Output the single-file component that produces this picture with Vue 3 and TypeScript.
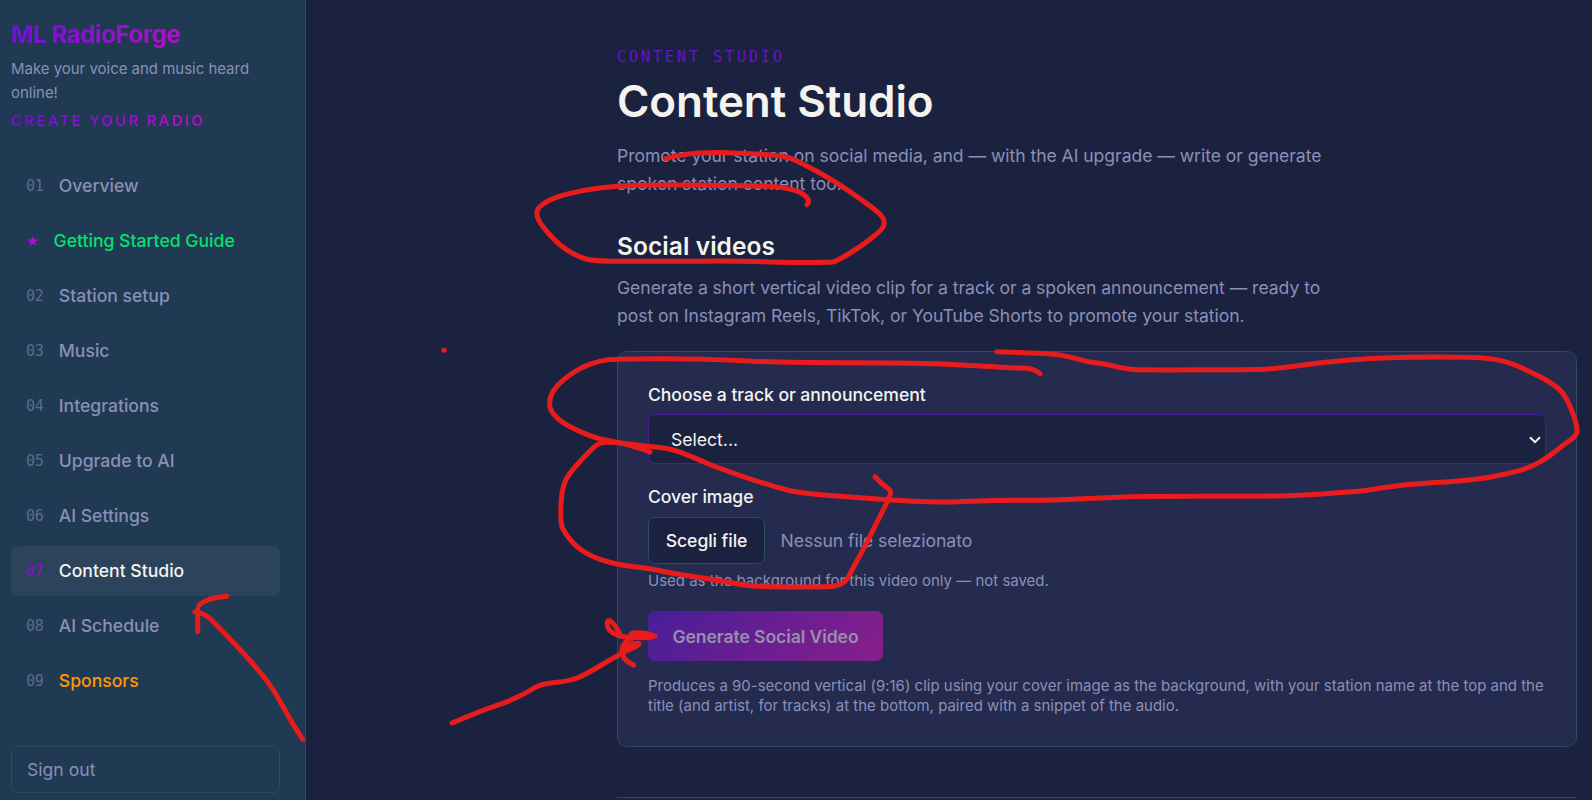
<script setup lang="ts">
interface NavItem {
  mark: string
  label: string
  tone?: 'guide' | 'sponsor'
  active?: boolean
}

type Point = [number, number]

const navItems: NavItem[] = [
  { mark: '01', label: 'Overview' },
  { mark: '★', label: 'Getting Started Guide', tone: 'guide' },
  { mark: '02', label: 'Station setup' },
  { mark: '03', label: 'Music' },
  { mark: '04', label: 'Integrations' },
  { mark: '05', label: 'Upgrade to AI' },
  { mark: '06', label: 'AI Settings' },
  { mark: '07', label: 'Content Studio', active: true },
  { mark: '08', label: 'AI Schedule' },
  { mark: '09', label: 'Sponsors', tone: 'sponsor' },
]

// Freehand marker strokes drawn over the page.
const strokes: Point[][] = [
  [[665.7, 158.7], [680, 154.3], [713, 152.3], [740, 153], [773, 155], [790, 157.5], [803, 164], [833, 180], [863, 200.7], [881.7, 215], [885, 223], [881.7, 230], [863, 245], [837, 261], [830, 262.5], [776.7, 262.3], [746.7, 261], [653, 261.3], [596.7, 261.3], [580, 257.7], [560, 246], [540, 224], [536, 213.3], [539, 206.7], [553, 197.7], [583, 190], [616.7, 186], [653, 184.7], [720, 185.3], [773, 186], [796.7, 190], [807, 196.7], [809, 201.7], [807, 204.7]],
  [[996.7, 351.7], [1023, 352.7], [1053, 354], [1070, 356.7], [1088, 362], [1103, 363.7], [1126.7, 369], [1140, 370], [1253, 369.7], [1276.7, 368.7], [1326.7, 362], [1366.7, 358.7], [1410, 357], [1460, 357], [1486.7, 358], [1503, 360.7], [1520, 366.7], [1553, 383.3], [1565, 395], [1573, 413], [1577.5, 428], [1576.5, 436], [1563, 445], [1550, 456], [1530, 467.7], [1506.7, 474], [1480, 479], [1446.7, 482], [1403, 484.3], [1363, 491.3], [1343, 492.3], [1300, 495.7], [1260, 496.3], [1136.7, 496.3], [1100, 498], [1066.7, 499.7], [1036.7, 500.3], [993, 500.3], [950, 502], [930, 502], [896.7, 500.7], [850, 497], [803, 493.3], [780, 488.7], [723, 470], [690, 456], [673, 449.3], [650, 446.3], [610, 442]],
  [[650, 452], [630, 444.5], [610, 441], [593, 437.3], [563, 424], [551, 411.7], [549, 403], [552, 391.7], [561.7, 381], [580, 367.7], [600, 360.7], [616.7, 358.7], [706.7, 358.7], [776.7, 362.7], [913, 362.7], [960, 365], [993, 366.7], [1013, 368], [1028, 368], [1036.7, 370.7], [1040, 374]],
  [[875, 476.7], [883, 485], [891, 490], [890, 496.7], [873, 530], [866.7, 543], [853, 568], [847, 580], [840, 585], [830, 587], [763, 587], [743, 585], [710, 579], [670, 573], [653, 569], [620, 565], [596.7, 559], [576.7, 547.7], [562.5, 530], [560.7, 520], [561, 500], [563, 486.7], [568, 475], [583, 458], [595, 446], [601.7, 442.3], [612, 442]],
  [[302.7, 739.3], [291.7, 723], [273, 688], [250, 660], [216.7, 625], [205, 614], [194.8, 611.7]],
  [[197.7, 609.3], [197.7, 631.5]],
  [[226.7, 596.3], [213, 597.7], [201.7, 602.7], [199, 605.3]],
  [[452, 723], [483, 710], [508, 701.7], [528, 692], [540, 684], [570, 681], [586.7, 674], [618, 655], [642, 643.5], [634, 643], [626, 647]],
  [[621, 636], [615, 625], [609, 619.5], [606.5, 623], [609, 631], [620, 636.7], [640, 638], [655, 637.5], [650, 633.5], [634, 632.5], [629, 635], [655, 636]],
  [[633.5, 665], [625, 661], [621, 651], [625, 641], [636, 637]],
  [[443.9, 350.3], [444.2, 350.3]],
]

function smoothPath(points: Point[]): string {
  let d = `M${points[0][0]} ${points[0][1]}`
  for (let i = 1; i < points.length - 1; i++) {
    const [x, y] = points[i]
    const [nx, ny] = points[i + 1]
    d += ` Q${x} ${y} ${(x + nx) / 2} ${(y + ny) / 2}`
  }
  const [ex, ey] = points[points.length - 1]
  return `${d} L${ex} ${ey}`
}
</script>

<template>
  <div class="app">
    <aside class="sidebar">
      <header class="brand">
        <div class="brand-name grad">ML RadioForge</div>
        <p class="tagline">Make your voice and music heard online!</p>
        <div class="callout grad">CREATE YOUR RADIO</div>
      </header>
      <nav class="nav">
        <a v-for="item in navItems" :key="item.mark" class="nav-item" :class="[item.tone, { active: item.active }]">
          <span class="mark">{{ item.mark }}</span>
          <span>{{ item.label }}</span>
        </a>
      </nav>
      <button class="sign-out" type="button">Sign out</button>
    </aside>

    <main class="main">
      <div class="content">
        <div class="eyebrow">CONTENT STUDIO</div>
        <h1>Content Studio</h1>
        <p class="lead">Promote your station on social media, and — with the AI upgrade — write or generate spoken station content too.</p>
        <h2>Social videos</h2>
        <p class="lead">Generate a short vertical video clip for a track or a spoken announcement — ready to post on Instagram Reels, TikTok, or YouTube Shorts to promote your station.</p>

        <section class="card">
          <label class="label" for="track">Choose a track or announcement</label>
          <div class="select-wrap">
            <select id="track" class="select">
              <option>Select...</option>
            </select>
            <svg class="chevron" viewBox="0 0 12 8" width="12" height="8" aria-hidden="true">
              <path d="M1 1.2 6 6.2 11 1.2" />
            </svg>
          </div>
          <div class="label">Cover image</div>
          <div class="file-row">
            <button class="file-button" type="button">Scegli file</button>
            <span class="file-name">Nessun file selezionato</span>
          </div>
          <p class="hint">Used as the background for this video only — not saved.</p>
          <button class="generate" type="button">Generate Social Video</button>
          <p class="hint">Produces a 90-second vertical (9:16) clip using your cover image as the background, with your station name at the top and the title (and artist, for tracks) at the bottom, paired with a snippet of the audio.</p>
        </section>
        <hr class="rule" />
      </div>
    </main>

    <svg class="marker" viewBox="0 0 1592 800" width="1592" height="800" aria-hidden="true">
      <path v-for="(stroke, i) in strokes" :key="i" :d="smoothPath(stroke)" />
    </svg>
  </div>
</template>

<style>
body {
  margin: 0;
  background: #1b223f;
  overflow: hidden;
}
</style>

<style scoped>
.app {
  position: relative;
  display: flex;
  width: 1592px;
  height: 800px;
  overflow: hidden;
  background: #1b223f;
  color: #8b8fb8;
  font-family: Inter, "Liberation Sans", sans-serif;
  font-size: 17.6px;
}
.app * {
  box-sizing: border-box;
}
p, h1, h2 {
  margin: 0;
}
button, select {
  font: inherit;
}
.sidebar {
  display: flex;
  flex-direction: column;
  width: 306px;
  height: 800px;
  flex: none;
  padding: 19px 25px 7px 11px;
  background: #1f3a52;
  border-right: 1px solid #2d4a63;
}
.brand {
  height: 142px;
  flex: none;
}
.grad {
  width: fit-content;
  background: linear-gradient(135deg, #6a11d8, #b80fc8);
  background-clip: text;
  -webkit-background-clip: text;
  color: transparent;
}
.brand-name {
  font-size: 24.2px;
  line-height: 32px;
  font-weight: 700;
  letter-spacing: -0.48px;
}
.tagline {
  margin-top: 6px;
  font-size: 14.96px;
  line-height: 24px;
}
.callout {
  margin-top: 4px;
  font-size: 15px;
  line-height: 23px;
  font-weight: 600;
  letter-spacing: 2.27px;
}
.nav {
  display: flex;
  flex-direction: column;
  gap: 5px;
}
.nav-item {
  display: flex;
  align-items: center;
  gap: 15.5px;
  height: 50px;
  padding: 0 15px 2px;
  border-radius: 7px;
  font-weight: 500;
}
.mark {
  width: 17.3px;
  padding-top: 2px;
  font-family: "DejaVu Sans Mono", monospace;
  font-size: 15px;
  letter-spacing: -0.3px;
  font-weight: 400;
  color: #5c6b8d;
}
.guide {
  color: #05e070;
}
.guide .mark {
  width: 12px;
  padding-top: 1px;
  font-family: "DejaVu Sans", sans-serif;
  font-size: 14.5px;
  color: #b00fce;
}
.sponsor {
  color: #ff9800;
}
.active {
  background: #2b445b;
  color: #f5f3ee;
}
.active .mark {
  background: linear-gradient(135deg, #6a11d8, #b80fc8);
  background-clip: text;
  -webkit-background-clip: text;
  color: transparent;
}
.sign-out {
  height: 47px;
  margin-top: auto;
  padding: 0 15px;
  border: 1px solid #2d4a63;
  border-radius: 7px;
  background: transparent;
  color: #8b8fb8;
  text-align: left;
}
.main {
  flex: 1;
  padding: 46px 15px 0 311px;
}
.content {
  width: 960px;
}
.eyebrow {
  font-family: "DejaVu Sans Mono", monospace;
  font-size: 15px;
  line-height: 23px;
  letter-spacing: 2.97px;
  color: #6a11cb;
}
h1 {
  margin-top: 4px;
  font-size: 44px;
  line-height: 56px;
  font-weight: 600;
  letter-spacing: -0.08px;
  color: #f5f3ee;
}
.lead {
  width: 720px;
  line-height: 28px;
  letter-spacing: -0.05px;
}
h1 + .lead {
  margin-top: 13px;
}
h2 {
  margin: 31px 0 11px;
  font-size: 24.5px;
  line-height: 34px;
  font-weight: 600;
  letter-spacing: 0.07px;
  color: #f5f3ee;
}
.card {
  display: flex;
  flex-direction: column;
  align-items: flex-start;
  height: 396px;
  margin-top: 21px;
  padding: 29px 30px;
  border: 1px solid #2d4a63;
  border-radius: 10px;
  background: #242b4e;
}
.label {
  height: 28px;
  line-height: 28px;
  font-weight: 500;
  letter-spacing: -0.06px;
  color: #f5f3ee;
}
.select-wrap {
  position: relative;
  width: 100%;
  height: 50px;
  margin: 5px 0 19px;
}
.select {
  width: 100%;
  height: 50px;
  padding: 0 40px 0 22px;
  appearance: none;
  border: 1px solid #4c1a9e;
  border-radius: 7px;
  background-color: #1b223f;
  color: #f5f3ee;
}
.chevron {
  position: absolute;
  top: 22px;
  right: 5px;
  pointer-events: none;
}
.chevron path {
  fill: none;
  stroke: #f5f3ee;
  stroke-width: 2;
}
.file-row {
  display: flex;
  align-items: center;
  gap: 15.5px;
  margin-top: 6px;
}
.file-button {
  height: 47px;
  width: 117px;
  padding: 0;
  border: 1px solid #2d4a63;
  border-radius: 7px;
  background: #1b223f;
  color: #f5f3ee;
  font-weight: 500;
  letter-spacing: -0.06px;
}
.file-name {
  letter-spacing: -0.05px;
}
.hint {
  margin-top: 7px;
  font-size: 14.96px;
  line-height: 20px;
  letter-spacing: 0.018px;
}
.generate {
  width: 235px;
  height: 50px;
  margin: 20px 0 8px;
  padding: 0;
  border: 0;
  border-radius: 7px;
  background: linear-gradient(135deg, #481e98, #881f8b);
  color: #9590a8;
  font-weight: 600;
  letter-spacing: -0.1px;
}
.card .hint:last-child {
  width: 900px;
}
.rule {
  height: 1px;
  margin: 50px 0 0;
  border: 0;
  background: #2d4a63;
}
.marker {
  position: absolute;
  inset: 0;
  pointer-events: none;
}
.marker path {
  fill: none;
  stroke: #e81c1c;
  stroke-width: 5;
  stroke-linecap: round;
  stroke-linejoin: round;
}
</style>
